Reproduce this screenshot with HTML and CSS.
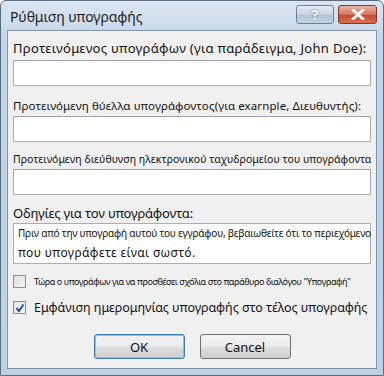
FILE: index.html
```html
<!DOCTYPE html>
<html lang="el">
<head>
    <meta charset="UTF-8">
    <title>Ρύθμιση υπογραφής</title>
    <link rel="stylesheet" href="styles.css">
</head>
<body>
    <div class="window">
        <!-- Γραμμή τίτλου -->
        <div class="titlebar">
            <span class="title">Ρύθμιση υπογραφής</span>
            <div class="caption-btns">
                <span class="cap-btn help">?</span>
                <span class="cap-btn close">
                    <svg width="14" height="11" viewBox="0 0 14 11">
                        <path d="M2 1 L12 10 M12 1 L2 10" stroke="#fff" stroke-width="3" stroke-linecap="round"/>
                    </svg>
                </span>
            </div>
        </div>

        <!-- Περιεχόμενο -->
        <div class="content">
            <div class="field">
                <label class="lbl big">Προτεινόμενος υπογράφων (για παράδειγμα, John Doe):</label>
                <div class="input"></div>
            </div>
            <div class="field">
                <label class="lbl mid">Προτεινόμενη θύελλα υπογράφοντος(για exarnple, Διευθυντής):</label>
                <div class="input"></div>
            </div>
            <div class="field">
                <label class="lbl small">Προτεινόμενη διεύθυνση ηλεκτρονικού ταχυδρομείου του υπογράφοντα</label>
                <div class="input"></div>
            </div>
            <div class="field">
                <label class="lbl big instr">Οδηγίες για τον υπογράφοντα:</label>
                <div class="textarea">
                    <p class="line1">Πριν από την υπογραφή αυτού του εγγράφου, βεβαιωθείτε ότι το περιεχόμενο</p>
                    <p class="line2">που υπογράφετε είναι σωστό.</p>
                </div>
            </div>
            <div class="check-row">
                <span class="checkbox"></span>
                <span class="check-lbl tiny">Τώρα ο υπογράφων για να προσθέσει σχόλια στο παράθυρο διαλόγου "Υπογραφή"</span>
            </div>
            <div class="check-row second">
                <span class="checkbox checked">
                    <svg width="10" height="10" viewBox="0 0 10 10">
                        <path d="M1.5 5 L4 8 L8.5 1.5" stroke="#2a4fa8" stroke-width="2" fill="none"/>
                    </svg>
                </span>
                <span class="check-lbl show-date">Εμφάνιση ημερομηνίας υπογραφής στο τέλος υπογραφής</span>
            </div>
            <div class="buttons">
                <button class="btn default">OK</button>
                <button class="btn">Cancel</button>
            </div>
        </div>
    </div>
</body>
</html>
```

FILE: styles.css
```css
* {
    margin: 0;
    padding: 0;
    box-sizing: border-box;
    font-family: 'Noto Sans', 'Open Sans', sans-serif;
}

body {
    width: 384px;
    height: 376px;
    overflow: hidden;
    background: #fff;
}

.window {
    width: 384px;
    height: 376px;
    display: flex;
    flex-direction: column;
    background: linear-gradient(#dbe6f2, #c3d4e7 40px, #bfd1e5);
    border: 1px solid #5a6c80;
    border-radius: 6px 6px 0 0;
    padding: 0 6px 6px 6px;
}

/* Γραμμή τίτλου */
.titlebar {
    height: 29px;
    display: flex;
    align-items: flex-start;
    justify-content: space-between;
}

.title {
    margin-top: 6px;
    margin-left: 3px;
    font-size: 14px;
    letter-spacing: -0.1px;
    color: #1e1e1e;
}

.caption-btns {
    display: flex;
    gap: 4px;
    margin-top: 4px;
}

.cap-btn {
    height: 19px;
    display: flex;
    align-items: center;
    justify-content: center;
    border: 1px solid #6d7f95;
    border-radius: 3px;
}

.help {
    width: 38px;
    background: linear-gradient(#e4ecf5, #c4d2e3 50%, #aebfd6 51%, #c5d5e8);
    color: #fff;
    font-weight: bold;
    font-size: 14px;
    text-shadow: 0 0 2px #4a5c75;
}

.close {
    width: 39px;
    background: linear-gradient(#eab3a5, #d8735c 50%, #c7432a 51%, #d9714f);
    border-color: #7a3a2e;
}

/* Περιεχόμενο */
.content {
    flex: 1;
    background: #f0f0f0;
    border: 1px solid #8293a8;
    padding: 8px 5px 0 5px;
    display: flex;
    flex-direction: column;
    color: #111;
}

.field {
    display: flex;
    flex-direction: column;
}

.lbl {
    display: block;
    white-space: nowrap;
}

.big {
    font-size: 13px;
    letter-spacing: 0.3px;
}

.instr {
    margin-top: 9px;
    letter-spacing: -0.2px;
}

.mid {
    font-size: 11.5px;
    margin-top: 12px;
    letter-spacing: 0.1px;
}

.small {
    font-size: 10.5px;
    margin-top: 10px;
    letter-spacing: 0.05px;
}

.input {
    height: 26px;
    margin-top: 3px;
    background: #fff;
    border: 1px solid #abadb3;
    border-top-color: #a0a3aa;
}

.textarea {
    height: 41px;
    margin-top: 1px;
    background: #fff;
    border: 1px solid #abadb3;
    padding: 2px 4px;
}

.line1 {
    font-size: 10px;
    white-space: nowrap;
    letter-spacing: -0.19px;
}

.line2 {
    font-size: 12px;
    margin-top: 4px;
    letter-spacing: 0.4px;
}

.check-row {
    display: flex;
    align-items: center;
    gap: 8px;
    margin-top: 11px;
}

.check-row.second {
    margin-top: 11px;
}

.checkbox {
    width: 13px;
    height: 13px;
    flex: none;
    border: 1px solid #8f8f8f;
    background: linear-gradient(135deg, #dcdcdc, #f6f6f6);
    display: flex;
    align-items: center;
    justify-content: center;
}

.checkbox.checked {
    background: linear-gradient(135deg, #dfe3ea, #fafafa);
}

.check-lbl {
    white-space: nowrap;
}

.tiny {
    font-size: 9px;
    letter-spacing: -0.42px;
}

.show-date {
    font-size: 12.5px;
    letter-spacing: -0.05px;
}

.buttons {
    display: flex;
    justify-content: center;
    gap: 15px;
    margin-top: 18px;
}

.btn {
    width: 91px;
    height: 25px;
    font-size: 13px;
    color: #111;
    border: 1px solid #707070;
    border-radius: 3px;
    background: linear-gradient(#f2f2f2, #ebebeb 50%, #dddddd 51%, #cfcfcf);
}

.btn.default {
    border-color: #3c7fb1;
    box-shadow: inset 0 0 0 1px #7ec4ec;
}
```
